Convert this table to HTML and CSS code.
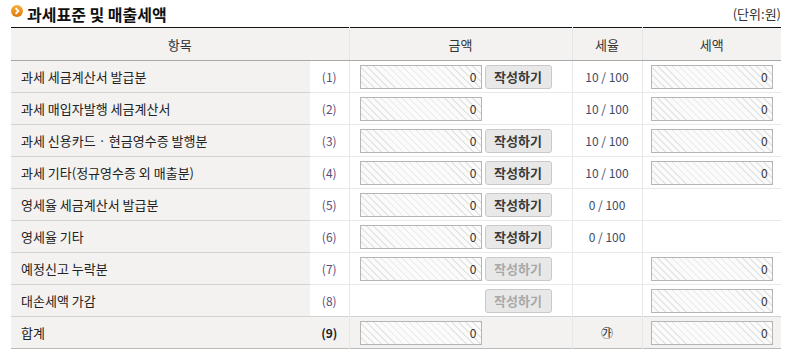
FILE: index.html
```html
<!DOCTYPE html>
<html>
  <head>
    <meta name="viewport" content="width=device-width, initial-scale=1">
    <link rel="stylesheet" href="styles.css">
  </head>

  <body>
    <div class="wrap">
      <div class="title-bar">
        <h3 class="title">
          <svg class="bullet" width="12" height="12" viewBox="0 0 12 12">
            <defs>
              <linearGradient id="og" x1="0" y1="0" x2="0" y2="1">
                <stop offset="0" stop-color="#f7b13c"/>
                <stop offset="1" stop-color="#e0760a"/>
              </linearGradient>
            </defs>
            <circle cx="6" cy="6" r="6" fill="url(#og)"/>
            <path d="M4.6 3.2 L7.4 6 L4.6 8.8" fill="none" stroke="#fff" stroke-width="1.8"/>
          </svg>
          과세표준 및 매출세액
        </h3>
        <span class="unit">(단위:원)</span>
      </div>

      <table class="tax-table">
        <colgroup>
          <col class="c-label">
          <col class="c-no">
          <col class="c-amt">
          <col class="c-rate">
          <col class="c-tax">
        </colgroup>
        <thead>
          <tr>
            <th colspan="2">항목</th>
            <th>금액</th>
            <th>세율</th>
            <th>세액</th>
          </tr>
        </thead>
        <tbody>
          <tr>
            <td class="label">과세 세금계산서 발급분</td>
            <td class="no">(1)</td>
            <td class="amt"><input class="num" readonly value="0"><button class="btn">작성하기</button></td>
            <td class="rate">10 / 100</td>
            <td class="tax"><input class="num" readonly value="0"></td>
          </tr>
          <tr>
            <td class="label">과세 매입자발행 세금계산서</td>
            <td class="no">(2)</td>
            <td class="amt"><input class="num" readonly value="0"></td>
            <td class="rate">10 / 100</td>
            <td class="tax"><input class="num" readonly value="0"></td>
          </tr>
          <tr>
            <td class="label">과세 신용카드 · 현금영수증 발행분</td>
            <td class="no">(3)</td>
            <td class="amt"><input class="num" readonly value="0"><button class="btn">작성하기</button></td>
            <td class="rate">10 / 100</td>
            <td class="tax"><input class="num" readonly value="0"></td>
          </tr>
          <tr>
            <td class="label">과세 기타(정규영수증 외 매출분)</td>
            <td class="no">(4)</td>
            <td class="amt"><input class="num" readonly value="0"><button class="btn">작성하기</button></td>
            <td class="rate">10 / 100</td>
            <td class="tax"><input class="num" readonly value="0"></td>
          </tr>
          <tr>
            <td class="label">영세율 세금계산서 발급분</td>
            <td class="no">(5)</td>
            <td class="amt"><input class="num" readonly value="0"><button class="btn">작성하기</button></td>
            <td class="rate">0 / 100</td>
            <td class="tax"></td>
          </tr>
          <tr>
            <td class="label">영세율 기타</td>
            <td class="no">(6)</td>
            <td class="amt"><input class="num" readonly value="0"><button class="btn">작성하기</button></td>
            <td class="rate">0 / 100</td>
            <td class="tax"></td>
          </tr>
          <tr>
            <td class="label">예정신고 누락분</td>
            <td class="no">(7)</td>
            <td class="amt"><input class="num" readonly value="0"><button class="btn" disabled>작성하기</button></td>
            <td class="rate"></td>
            <td class="tax"><input class="num" readonly value="0"></td>
          </tr>
          <tr>
            <td class="label">대손세액 가감</td>
            <td class="no">(8)</td>
            <td class="amt"><span class="spacer"></span><button class="btn" disabled>작성하기</button></td>
            <td class="rate"></td>
            <td class="tax"><input class="num" readonly value="0"></td>
          </tr>
          <tr class="total">
            <td class="label">합계</td>
            <td class="no">(9)</td>
            <td class="amt"><input class="num" readonly value="0"></td>
            <td class="rate">㉮</td>
            <td class="tax"><input class="num" readonly value="0"></td>
          </tr>
        </tbody>
      </table>
    </div>
  </body>
</html>
```

FILE: styles.css
```css
body {
  margin: 0;
  font-family: "Malgun Gothic", "Noto Sans CJK KR", sans-serif;
  font-size: 12px;
  color: #333;
  background: #fff;
}

.wrap {
  padding: 0 12px 0 11px;
}

/* heading line above the table */
.title-bar {
  display: flex;
  align-items: center;
  justify-content: space-between;
  height: 27px;
}

.title {
  display: flex;
  align-items: center;
  gap: 4px;
  margin: 0;
  font-size: 16px;
  font-weight: bold;
  color: #111;
}

.bullet {
  margin-top: -6px;
}

.unit {
  font-size: 13px;
  color: #333;
}

/* main table */
.tax-table {
  width: 100%;
  border-collapse: collapse;
  table-layout: fixed;
  border-top: 1px solid #111;
  border-bottom: 1px solid #bbb;
}

.c-label { width: 299px; }
.c-no { width: 39px; }
.c-amt { width: 223px; }
.c-rate { width: 70px; }
.c-tax { width: 139px; }

.tax-table th {
  height: 32px;
  padding: 0;
  background: #f3f2f1;
  font-size: 13px;
  font-weight: normal;
  color: #333;
  border-bottom: 1px solid #a8a8a8;
  border-left: 1px solid #e6e6e6;
}

.tax-table th:first-child {
  border-left: none;
}

.tax-table td {
  height: 31px;
  padding: 0;
  border-top: 1px solid #e8e8e8;
  border-left: 1px solid #e8e8e8;
}

.tax-table tbody tr:first-child td {
  border-top: none;
}

.tax-table td.label {
  padding-left: 10px;
  background: #f3f2f1;
  font-size: 13px;
  color: #222;
  border-left: none;
  border-top-color: #d2d2d2;
}

.tax-table td.no {
  text-align: center;
  color: #5a4c78;
  border-left: none;
}

.tax-table td.amt {
  padding-left: 10px;
}

.tax-table td.rate {
  text-align: center;
  color: #3e4a66;
}

.tax-table td.tax {
  text-align: center;
}

.tax-table tr.total td {
  background: #f3f2f1;
  border-top-color: #d2d2d2;
}

.tax-table tr.total td.no {
  font-weight: bold;
  color: #222;
}

.tax-table tr.total td.rate {
  color: #222;
}

/* read-only number boxes */
.num {
  box-sizing: border-box;
  width: 122px;
  height: 24px;
  padding: 0 4px 0 0;
  vertical-align: middle;
  border: 1px solid #b5b5b5;
  background: repeating-linear-gradient(45deg, #fbfbfb 0, #fbfbfb 4px, #e6e6e6 4px, #e6e6e6 5px);
  font-family: inherit;
  font-size: 12px;
  color: #333;
  text-align: right;
  outline: none;
}

.spacer {
  display: inline-block;
  width: 122px;
  vertical-align: middle;
}

.btn {
  box-sizing: border-box;
  width: 67px;
  height: 24px;
  margin-left: 3px;
  padding: 0;
  vertical-align: middle;
  border: 1px solid #c9c9c9;
  border-radius: 3px;
  background: #e8e8e8;
  font-family: inherit;
  font-size: 13px;
  font-weight: bold;
  color: #3a3a3a;
  cursor: pointer;
}

.btn:disabled {
  color: #a8a8a8;
  cursor: default;
}
```
